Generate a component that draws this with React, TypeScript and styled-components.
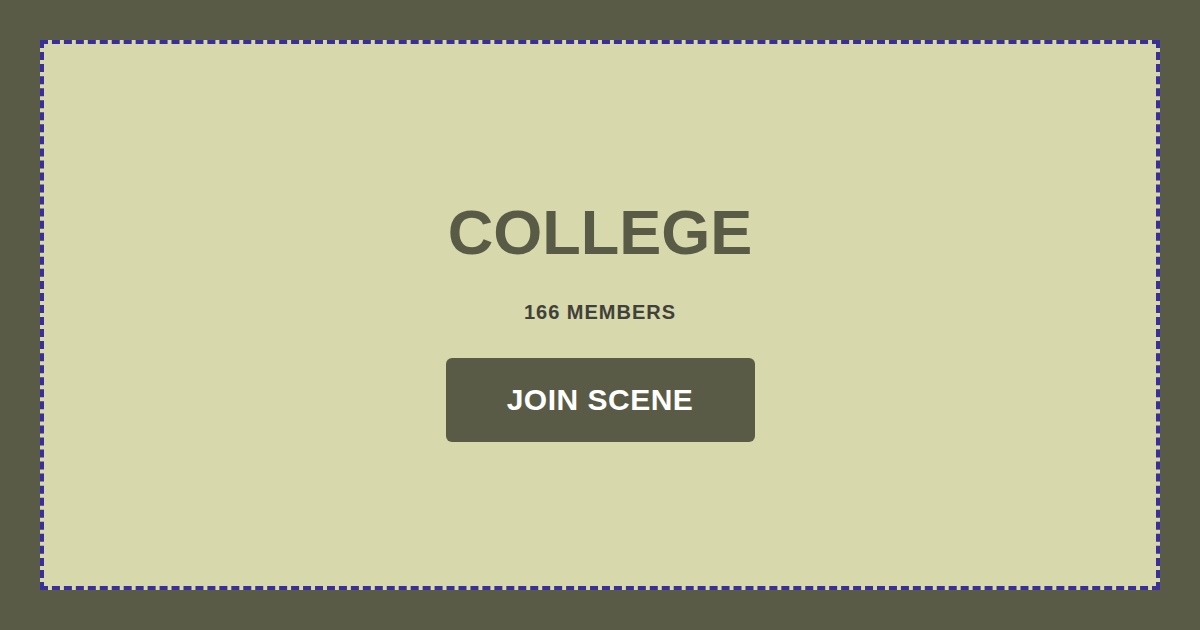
import React from 'react';
import styled, {createGlobalStyle} from 'styled-components';

const GlobalStyle = createGlobalStyle`
    * {
        box-sizing: border-box;
    }
    html, body {
        margin: 0;
        padding: 0;
        background: #5a5b46;
        font-family: "Liberation Sans", Arial, sans-serif;
    }
`;

const Page = styled.div`
    width: 1200px;
    height: 630px;
    padding: 40px;
    background: #5a5b46;
`;

const Card = styled.div`
    width: 100%;
    height: 100%;
    background: #d7d8ab;
    border: 4px dashed #3a2d9e;
    display: flex;
    flex-direction: column;
    align-items: center;
    justify-content: center;
    padding-top: 12px;
`;

const Title = styled.h1`
    margin: 0;
    font-size: 63px;
    line-height: 1;
    font-weight: 700;
    color: #5a5b46;
`;

const Members = styled.div`
    margin-top: 38px;
    font-size: 20px;
    line-height: 1;
    font-weight: 700;
    color: #40413a;
    letter-spacing: 1px;
`;

const JoinButton = styled.button`
    margin-top: 36px;
    width: 309px;
    height: 84px;
    border: none;
    border-radius: 6px;
    background: #5a5b46;
    color: #ffffff;
    font-family: "Liberation Sans", Arial, sans-serif;
    font-size: 30px;
    font-weight: 700;
    letter-spacing: 0.5px;
    cursor: pointer;
`;

const App = () => {
    return (
        <>
            <GlobalStyle/>
            <Page>
                <Card>
                    <Title>COLLEGE</Title>
                    <Members>166 MEMBERS</Members>
                    <JoinButton>JOIN SCENE</JoinButton>
                </Card>
            </Page>
        </>
    );
};

export default App;
